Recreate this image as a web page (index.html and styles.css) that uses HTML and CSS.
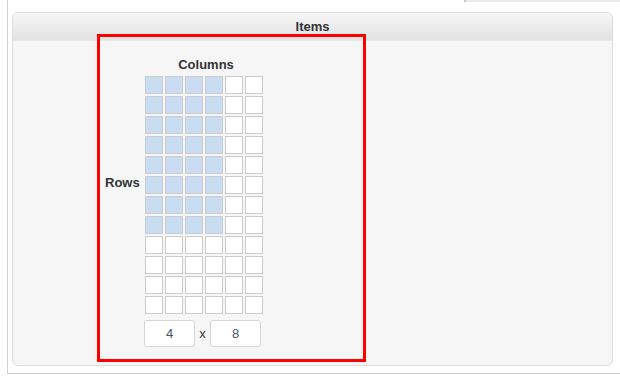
FILE: index.html
```html
<!DOCTYPE html>
<html lang="en">
<head>
    <meta charset="UTF-8">
    <title>Items</title>
    <link rel="stylesheet" href="styles.css">
</head>
<body>
    <div class="page">
        <div class="top-strip"></div>
        <div class="panel">
            <div class="panel-header">Items</div>
            <div class="panel-body">
                <div class="picker">
                    <div class="rows-label">Rows</div>
                    <div class="picker-main">
                        <div class="cols-label">Columns</div>
                        <div class="grid">
                            <div class="cell on"></div><div class="cell on"></div><div class="cell on"></div><div class="cell on"></div><div class="cell"></div><div class="cell"></div>
                            <div class="cell on"></div><div class="cell on"></div><div class="cell on"></div><div class="cell on"></div><div class="cell"></div><div class="cell"></div>
                            <div class="cell on"></div><div class="cell on"></div><div class="cell on"></div><div class="cell on"></div><div class="cell"></div><div class="cell"></div>
                            <div class="cell on"></div><div class="cell on"></div><div class="cell on"></div><div class="cell on"></div><div class="cell"></div><div class="cell"></div>
                            <div class="cell on"></div><div class="cell on"></div><div class="cell on"></div><div class="cell on"></div><div class="cell"></div><div class="cell"></div>
                            <div class="cell on"></div><div class="cell on"></div><div class="cell on"></div><div class="cell on"></div><div class="cell"></div><div class="cell"></div>
                            <div class="cell on"></div><div class="cell on"></div><div class="cell on"></div><div class="cell on"></div><div class="cell"></div><div class="cell"></div>
                            <div class="cell on"></div><div class="cell on"></div><div class="cell on"></div><div class="cell on"></div><div class="cell"></div><div class="cell"></div>
                            <div class="cell"></div><div class="cell"></div><div class="cell"></div><div class="cell"></div><div class="cell"></div><div class="cell"></div>
                            <div class="cell"></div><div class="cell"></div><div class="cell"></div><div class="cell"></div><div class="cell"></div><div class="cell"></div>
                            <div class="cell"></div><div class="cell"></div><div class="cell"></div><div class="cell"></div><div class="cell"></div><div class="cell"></div>
                            <div class="cell"></div><div class="cell"></div><div class="cell"></div><div class="cell"></div><div class="cell"></div><div class="cell"></div>
                        </div>
                        <div class="size-row">
                            <input class="size-input" type="text" value="4">
                            <span class="size-x">x</span>
                            <input class="size-input" type="text" value="8">
                        </div>
                    </div>
                </div>
            </div>
        </div>
        <div class="highlight"></div>
    </div>
</body>
</html>
```

FILE: styles.css
```css
body {
    margin: 0;
    background-color: white;
    font-family: "Liberation Sans", Arial, sans-serif;
    color: #333;
}

.page {
    position: relative;
    margin-left: 7px;
    height: 373px;
    border-left: 1px solid #d0d0d0;
    border-bottom: 1px solid #d0d0d0;
    padding-left: 4px;
}

.top-strip {
    height: 2px;
    margin-left: 452px;
    background-color: #ebebeb;
    border-left: 2px solid #c4c4c4;
}

.panel {
    margin-top: 10px;
    width: 599px;
    height: 352px;
    border: 1px solid #dcdcdc;
    border-radius: 6px;
    background-color: #f6f6f6;
    overflow: hidden;
}

.panel-header {
    height: 27px;
    line-height: 27px;
    text-align: center;
    font-size: 13px;
    font-weight: bold;
    border-bottom: 1px solid #e8e8e8;
    background: linear-gradient(#f6f6f6, #e2e2e2);
}

.panel-body {
    padding-left: 92px;
    padding-top: 16px;
}

.picker {
    display: flex;
}

.rows-label {
    width: 40px;
    margin-top: 118px;
    font-size: 13px;
    font-weight: bold;
    line-height: 16px;
}

.picker-main {
    display: flex;
    flex-direction: column;
    align-items: flex-start;
}

.cols-label {
    width: 122px;
    text-align: center;
    font-size: 13px;
    font-weight: bold;
    line-height: 16px;
    margin-bottom: 3px;
}

.grid {
    display: grid;
    grid-template-columns: repeat(6, 18px);
    grid-auto-rows: 18px;
    gap: 2px;
}

.cell {
    border: 1px solid #cccccc;
    background-color: white;
}

.cell.on {
    background-color: #c8ddf2;
}

.size-row {
    display: flex;
    align-items: center;
    margin-top: 6px;
    margin-left: -1px;
}

.size-input {
    box-sizing: border-box;
    width: 51px;
    height: 27px;
    padding: 0;
    border: 1px solid #d4d4d4;
    border-radius: 3px;
    background-color: white;
    text-align: center;
    font-family: "Liberation Sans", Arial, sans-serif;
    font-size: 13px;
    color: #456;
}

.size-x {
    width: 15px;
    text-align: center;
    font-size: 13px;
}

.highlight {
    position: absolute;
    left: 89px;
    top: 34px;
    width: 263px;
    height: 322px;
    border: 3px solid red;
}
```
